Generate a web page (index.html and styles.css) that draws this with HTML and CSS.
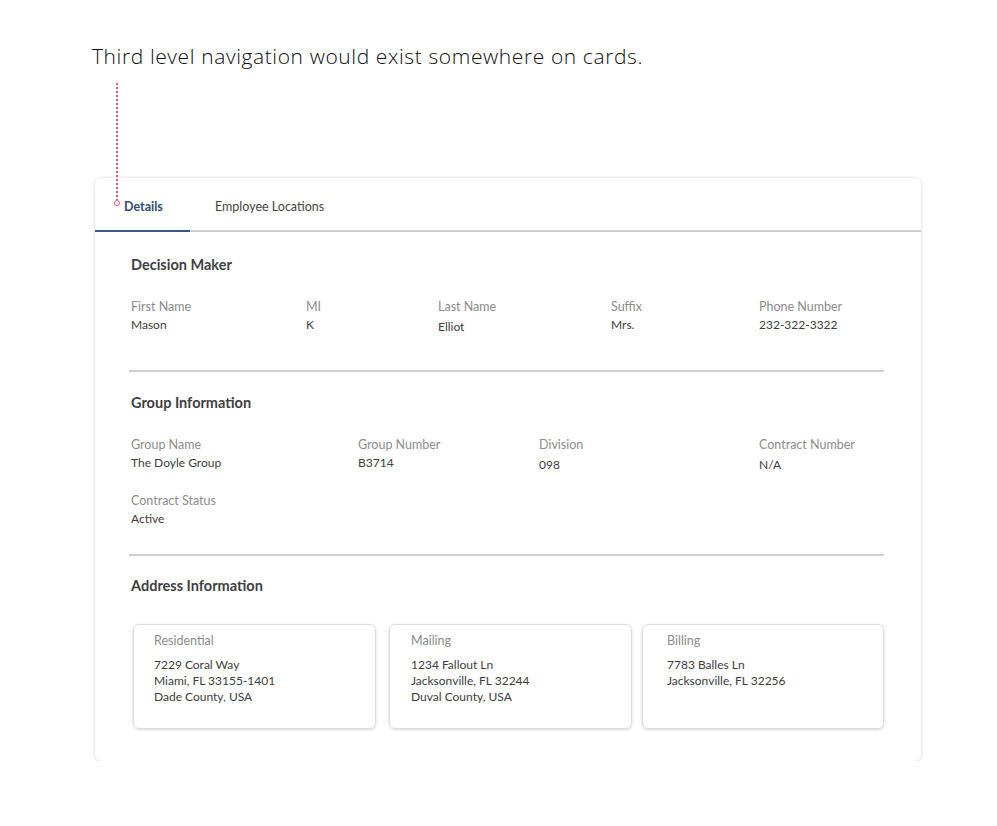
FILE: index.html
```html
<!DOCTYPE html>
<html>
<head>
<meta charset="utf-8">
<link rel="stylesheet" href="styles.css">
</head>
<body>
<div class="page">
  <p class="title">Third level navigation would exist somewhere on cards.</p>
  <div class="card">
    <div class="pointer"><span class="dots"></span><span class="ring"></span></div>
    <nav class="tabs">
      <a class="tab tab-active">Details</a>
      <a class="tab tab-second">Employee Locations</a>
    </nav>
    <div class="body">
      <section class="section section-decision">
        <h2 class="heading">Decision Maker</h2>
        <div class="grid grid-decision">
          <div class="field"><span class="label">First Name</span><span class="value">Mason</span></div>
          <div class="field"><span class="label">MI</span><span class="value">K</span></div>
          <div class="field"><span class="label">Last Name</span><span class="value value-low">Elliot</span></div>
          <div class="field"><span class="label">Suffix</span><span class="value">Mrs.</span></div>
          <div class="field"><span class="label">Phone Number</span><span class="value">232-322-3322</span></div>
        </div>
      </section>
      <hr class="divider">
      <section class="section section-group">
        <h2 class="heading">Group Information</h2>
        <div class="grid grid-group">
          <div class="field"><span class="label">Group Name</span><span class="value">The Doyle Group</span></div>
          <div class="field"><span class="label">Group Number</span><span class="value">B3714</span></div>
          <div class="field"><span class="label">Division</span><span class="value value-low">098</span></div>
          <div class="field"><span class="label">Contract Number</span><span class="value value-low">N/A</span></div>
          <div class="field"><span class="label">Contract Status</span><span class="value">Active</span></div>
        </div>
      </section>
      <hr class="divider">
      <section class="section section-address">
        <h2 class="heading">Address Information</h2>
        <div class="addresses">
          <div class="addr">
            <span class="addr-label">Residential</span>
            <span class="addr-line">7229 Coral Way</span>
            <span class="addr-line">Miami, FL 33155-1401</span>
            <span class="addr-line">Dade County, USA</span>
          </div>
          <div class="addr addr-mailing">
            <span class="addr-label">Mailing</span>
            <span class="addr-line">1234 Fallout Ln</span>
            <span class="addr-line">Jacksonville, FL 32244</span>
            <span class="addr-line">Duval County, USA</span>
          </div>
          <div class="addr addr-billing">
            <span class="addr-label">Billing</span>
            <span class="addr-line">7783 Balles Ln</span>
            <span class="addr-line">Jacksonville, FL 32256</span>
          </div>
        </div>
      </section>
    </div>
  </div>
</div>
</body>
</html>
```

FILE: styles.css
```css
* { box-sizing: border-box; }
html, body { margin: 0; padding: 0; background: #ffffff; }
body { font-family: Lato, "Noto Sans", sans-serif; color: #333; }

.page { padding-top: 44px; }

.title {
  margin: 0 0 0 92px;
  font-family: "Open Sans", sans-serif;
  font-weight: 300;
  font-size: 21px;
  line-height: 24px;
  color: #0d0d0d;
  letter-spacing: 0.6px;
}

.card {
  position: relative;
  width: 826px;
  margin: 110px 0 0 95px;
  background: #fff;
  border-radius: 6px;
  box-shadow: 0 0 3px rgba(0,0,0,0.12), 0 1px 4px rgba(0,0,0,0.1);
  padding-bottom: 32px;
}

.pointer {
  position: absolute;
  left: 19px;
  top: -95px;
  width: 7px;
  height: 130px;
}
.dots {
  position: absolute;
  left: 2px;
  top: 0;
  width: 2px;
  height: 117px;
  background: repeating-linear-gradient(to bottom, #f2507a 0 2px, transparent 2px 4px);
}
.ring {
  position: absolute;
  left: 0;
  top: 117px;
  width: 6px;
  height: 6px;
  border: 1.3px solid #f2507a;
  border-radius: 50%;
  background: #fff;
}

.tabs {
  display: flex;
  height: 54px;
  border-bottom: 2px solid #cfcfcf;
}
.tab {
  display: flex;
  align-items: center;
  font-size: 12.5px;
  color: #444;
  padding-top: 4px;
}
.tab-active {
  padding: 4px 28px 0 29px;
  color: #2e4d72;
  font-weight: 700;
  border-bottom: 2px solid #355b85;
  margin-bottom: -2px;
  width: 95px;
}
.tab-second { padding-left: 25px; }

.body { padding: 0 37px 0 34px; }

.section { padding-left: 2px; }
.section-decision { padding-top: 23px; padding-bottom: 35px; }
.section-group { padding-top: 21px; padding-bottom: 27px; }
.section-address { padding-top: 20px; }

.heading {
  margin: 0;
  font-size: 14.5px;
  line-height: 20px;
  font-weight: 700;
  color: #3f3f3f;
}

.grid {
  display: grid;
  margin-top: 23px;
  row-gap: 19px;
}
.grid-decision { grid-template-columns: 175px 132px 173px 148px 1fr; }
.grid-group { grid-template-columns: 227px 181px 220px 1fr; }

.field { display: flex; flex-direction: column; }
.label {
  font-size: 12.5px;
  line-height: 17px;
  color: #8c8c8c;
  font-weight: 400;
}
.value {
  font-size: 12px;
  line-height: 17px;
  color: #3d3d3d;
  margin-top: 1px;
}
.value-low { margin-top: 3px; }

.divider {
  margin: 0;
  border: 0;
  height: 2px;
  background: #cfcfcf;
}

.addresses {
  display: flex;
  justify-content: space-between;
  margin-top: 28px;
  padding-left: 2px;
}
.addr {
  width: 243px;
  height: 105px;
  border: 1px solid #dcdcdc;
  border-radius: 6px;
  box-shadow: 0 1px 3px rgba(0,0,0,0.16);
  padding: 8px 20px 0 20px;
  display: flex;
  flex-direction: column;
}
.addr-mailing { margin-left: 13px; padding-left: 21px; }
.addr-billing { width: 242px; margin-left: 10px; padding-left: 24px; }
.addr-label {
  font-size: 12.5px;
  line-height: 16px;
  color: #8c8c8c;
  font-weight: 400;
  margin-bottom: 8px;
}
.addr-line {
  font-size: 12px;
  line-height: 16px;
  color: #3d3d3d;
}
```
